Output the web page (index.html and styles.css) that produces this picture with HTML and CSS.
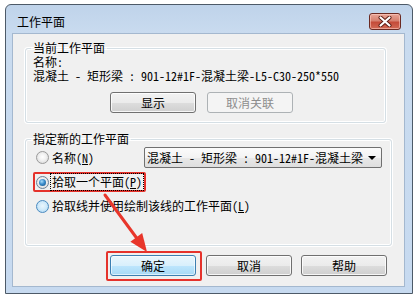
FILE: index.html
```html
<!DOCTYPE html>
<html lang="zh-CN">
<head>
<meta charset="utf-8">
<title>工作平面</title>
<link rel="stylesheet" href="styles.css">
</head>
<body>
<div class="window">
  <div class="titlebar">
    <span class="title">工作平面</span>
    <span class="close">
      <svg width="14" height="11" viewBox="0 0 14 11">
        <path d="M2.5 1.5 L11.5 9.5 M11.5 1.5 L2.5 9.5" stroke="#5a1a12" stroke-width="4" stroke-linecap="round"/>
        <path d="M2.5 1.5 L11.5 9.5 M11.5 1.5 L2.5 9.5" stroke="#ffffff" stroke-width="2.2" stroke-linecap="round"/>
      </svg>
    </span>
  </div>
  <div class="client">
    <fieldset class="group g1">
      <legend>当前工作平面</legend>
      <div class="line">名称:</div>
      <div class="line">混凝土 - 矩形梁 : 901-12#1F-混凝土梁-L5-C30-250*550</div>
      <div class="btnrow">
        <span class="btn">显示</span>
        <span class="btn disabled">取消关联</span>
      </div>
    </fieldset>
    <fieldset class="group g2">
      <legend>指定新的工作平面</legend>
      <div class="opt opt1">
        <span class="radio"></span>
        <span class="label">名称(<u>N</u>)</span>
        <span class="combo">
          <span class="combo-text">混凝土 - 矩形梁 : 901-12#1F-混凝土梁</span>
          <span class="combo-arrow"></span>
        </span>
      </div>
      <div class="opt opt2">
        <span class="radio checked"></span>
        <span class="label focus">拾取一个平面(<u>P</u>)</span>
      </div>
      <div class="opt opt3">
        <span class="radio hover"></span>
        <span class="label">拾取线并使用绘制该线的工作平面(<u>L</u>)</span>
      </div>
    </fieldset>
    <div class="footer">
      <span class="mark"><span class="btn default">确定</span></span>
      <span class="btn cancel">取消</span>
      <span class="btn help">帮助</span>
    </div>
  </div>
</div>
<svg class="arrow" width="418" height="300" viewBox="0 0 418 300">
  <line x1="105" y1="195" x2="137" y2="238.5" stroke="#e8362b" stroke-width="3" stroke-linecap="round"/>
  <polygon points="147,252 130.4,241.8 142.2,233" fill="#e8362b"/>
</svg>
</body>
</html>
```

FILE: styles.css
```css
* { box-sizing: border-box; }
html, body {
  margin: 0;
  padding: 0;
  background: #ffffff;
}
body {
  width: 418px;
  height: 300px;
  overflow: hidden;
  position: relative;
  font-family: "Noto Sans Mono CJK SC", "Noto Sans CJK SC", "DejaVu Sans", sans-serif;
  font-size: 12px;
  color: #000;
}
.window {
  margin: 4px 0 0 5px;
  width: 408px;
  height: 290px;
  border: 1px solid #4d5a68;
  border-radius: 6px 6px 0 0;
  background: linear-gradient(#bfd3ea 0px, #c9dbef 28px, #c7daf0 100%);
  padding: 0 7px 6px 6px;
  display: flex;
  flex-direction: column;
}
.titlebar {
  height: 28px;
  padding-top: 6px;
  display: flex;
  align-items: center;
  justify-content: space-between;
  padding-left: 5px;
  padding-right: 4px;
  flex: none;
}
.title {
  line-height: 22px;
  font-size: 12px;
  color: #000;
}
.close {
  width: 32px;
  height: 17px;
  margin-top: -1px;
  border: 1px solid #6b2a22;
  border-radius: 3px;
  background: linear-gradient(#e9a597 0%, #d6806f 45%, #c44b39 55%, #d26a55 100%);
  box-shadow: inset 0 0 0 1px rgba(255, 210, 200, 0.55);
  display: flex;
  align-items: center;
  justify-content: center;
}
.close svg { display: block; }
.client {
  flex: 1;
  background: #f0f0f0;
  border: 1px solid #a4b8cf;
  padding: 0 0 0 12px;
}
.group {
  margin: 0;
  border: 1px solid #d5dfe5;
  border-radius: 3px;
  box-shadow: inset 0 0 0 1px #ffffff, 0 0 0 1px #ffffff;
  padding: 0 0 0 7px;
  min-width: 0;
}
.group legend {
  padding: 0 2px;
  margin-left: -2px;
  line-height: 14px;
  font-size: 12px;
}
.g1 {
  margin-top: 7px;
  width: 361px;
  padding-bottom: 9px;
}
.line {
  line-height: 14px;
  white-space: nowrap;
}
.btnrow {
  display: flex;
  margin-top: 9px;
  padding-left: 77px;
  gap: 11px;
}
.btn {
  width: 86px;
  height: 21px;
  border: 1px solid #707070;
  border-radius: 3px;
  background: linear-gradient(#f2f2f2 0%, #ebebeb 50%, #dddddd 51%, #cfcfcf 100%);
  box-shadow: inset 0 0 0 1px rgba(255, 255, 255, 0.8);
  display: flex;
  align-items: center;
  justify-content: center;
  line-height: 14px;
  flex: none;
}
.btn.disabled {
  border-color: #adb2b5;
  background: #f4f4f4;
  color: #8d8d8d;
  box-shadow: none;
}
.btn.default {
  border-color: #3c7fb1;
  background: linear-gradient(#eaf6fd 0%, #d9f0fc 50%, #bee6fd 51%, #a7d9f5 100%);
  box-shadow: inset 0 0 0 1px rgba(255, 255, 255, 0.6);
}
.g2 {
  margin-top: 9px;
  width: 367px;
  padding-bottom: 29px;
}
.opt {
  display: flex;
  align-items: center;
  margin-left: 3px;
  height: 20px;
}
.opt1 {
  height: 21px;
  margin-top: 1px;
}
.opt2 {
  width: max-content;
  margin-top: 4px;
  margin-left: 0;
  border: 2px solid #e5322b;
  border-radius: 2px;
  padding-left: 1px;
  padding-right: 2px;
}
.opt3 {
  margin-top: 4px;
}
.radio {
  width: 13px;
  height: 13px;
  border-radius: 50%;
  border: 1px solid #9a9a9a;
  background: radial-gradient(circle at 50% 45%, #ffffff 0%, #f2f2f2 40%, #d2d2d2 100%);
  margin-right: 3px;
  flex: none;
  position: relative;
}
.radio.checked {
  border-color: #6b8197;
}
.radio.checked::after {
  content: "";
  position: absolute;
  left: 2px;
  top: 2px;
  width: 7px;
  height: 7px;
  border-radius: 50%;
  background: radial-gradient(circle at 40% 35%, #a9dcf9 0%, #3a8ccc 45%, #174d7e 100%);
}
.radio.hover {
  border-color: #4c8bc0;
  background: radial-gradient(circle at 50% 45%, #eaf6fd 0%, #cfe9fa 50%, #9fd0ee 100%);
}
.label {
  line-height: 14px;
  white-space: nowrap;
}
.label u { text-decoration-thickness: 1px; text-underline-offset: 1px; }
.label.focus {
  outline: 1px dotted #000;
  outline-offset: 1px;
}
.combo {
  margin-left: 50px;
  width: 238px;
  height: 21px;
  border: 1px solid #707070;
  border-radius: 2px;
  background: linear-gradient(#fbfbfb 0%, #f3f3f3 50%, #e8e8e8 51%, #dedede 100%);
  display: flex;
  align-items: center;
  justify-content: space-between;
  padding: 0 5px 0 2px;
}
.combo-text {
  white-space: nowrap;
  line-height: 14px;
}
.combo-arrow {
  width: 0;
  height: 0;
  border-left: 4px solid transparent;
  border-right: 4px solid transparent;
  border-top: 4px solid #000;
}
.footer {
  display: flex;
  margin-top: 5px;
  padding-left: 81px;
  align-items: flex-start;
}
.mark {
  border: 2px solid #e5322b;
  border-radius: 2px;
  padding: 2px 4px 3px 2px;
  display: flex;
}
.cancel {
  margin-left: 4px;
  margin-top: 4px;
}
.help {
  margin-left: 9px;
  margin-top: 4px;
}
.arrow {
  position: absolute;
  left: 0;
  top: 0;
  pointer-events: none;
}
```
